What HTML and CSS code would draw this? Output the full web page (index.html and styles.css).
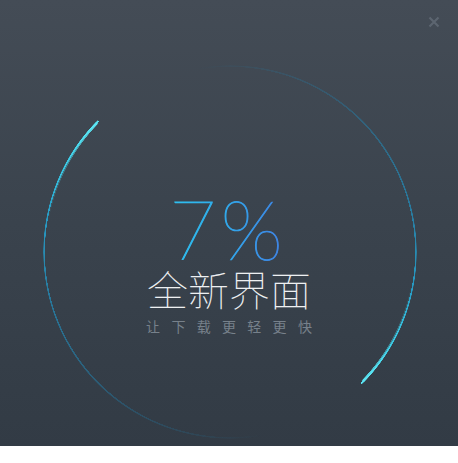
FILE: index.html
```html
<!DOCTYPE html>
<html lang="zh">
<head>
<meta charset="utf-8">
<link rel="stylesheet" href="styles.css">
</head>
<body>
<div class="panel">
  <div class="ring ring-thin"></div>
  <div class="ring ring-thick"></div>
  <button class="close" aria-label="关闭">
    <svg width="12" height="12" viewBox="0 0 12 12"><path d="M1.5 1.5 L10.5 10.5 M10.5 1.5 L1.5 10.5" stroke="#5c6570" stroke-width="2.2" stroke-linecap="butt"/></svg>
  </button>
  <div class="content">
    <svg class="percent" width="124" height="64" viewBox="0 0 124 64">
      <defs>
        <linearGradient id="pg" x1="0" y1="0" x2="1" y2="0">
          <stop offset="0" stop-color="#2ec2f0"/>
          <stop offset="0.45" stop-color="#30aaea"/>
          <stop offset="1" stop-color="#3f7fe2"/>
        </linearGradient>
      </defs>
      <text class="percent-text" x="62" y="61" text-anchor="middle" fill="url(#pg)" stroke="url(#pg)" stroke-width="0.9">7%</text>
    </svg>
    <div class="title">全新界面</div>
    <div class="subtitle">让下载更轻更快</div>
  </div>
</div>
</body>
</html>
```
FILE: styles.css
```css
html, body {
  margin: 0;
  padding: 0;
  background: #ffffff;
}
.panel {
  position: relative;
  width: 458px;
  height: 446px;
  background: linear-gradient(180deg, #444c56 0%, #3a434d 50%, #323b45 100%);
  overflow: hidden;
  display: flex;
  flex-direction: column;
  align-items: center;
}
.ring {
  position: absolute;
  left: 43px;
  top: 65px;
  width: 374px;
  height: 374px;
  border-radius: 50%;
}
.ring-thin {
  background: conic-gradient(from 135deg,
    rgba(30, 120, 170, 0) 0deg,
    rgba(30, 120, 170, 0) 35deg,
    rgba(30, 135, 185, 0.3) 80deg,
    rgba(32, 150, 200, 0.65) 120deg,
    rgba(38, 170, 215, 0.9) 150deg,
    #3ccbe8 170deg,
    #5ae4f3 180deg,
    rgba(30, 120, 170, 0) 180deg,
    rgba(30, 120, 170, 0) 215deg,
    rgba(30, 135, 185, 0.3) 260deg,
    rgba(32, 150, 200, 0.65) 300deg,
    rgba(38, 170, 215, 0.9) 330deg,
    #3ccbe8 350deg,
    #5ae4f3 360deg);
  -webkit-mask: radial-gradient(closest-side, transparent calc(100% - 2px), #000 calc(100% - 1.8px), #000 calc(100% - 0.6px), transparent 100%);
  mask: radial-gradient(closest-side, transparent calc(100% - 2px), #000 calc(100% - 1.8px), #000 calc(100% - 0.6px), transparent 100%);
}
.ring-thick {
  background: conic-gradient(from 135deg,
    transparent 145deg,
    rgba(70, 220, 240, 0.45) 165deg,
    #5ce6f4 179deg,
    transparent 179.5deg,
    transparent 325deg,
    rgba(70, 220, 240, 0.45) 345deg,
    #5ce6f4 359deg,
    transparent 359.5deg);
  -webkit-mask: radial-gradient(closest-side, transparent calc(100% - 3.2px), #000 calc(100% - 2.8px), #000 calc(100% - 0.4px), transparent 100%);
  mask: radial-gradient(closest-side, transparent calc(100% - 3.2px), #000 calc(100% - 2.8px), #000 calc(100% - 0.4px), transparent 100%);
}
.close {
  position: absolute;
  top: 16px;
  right: 18px;
  width: 12px;
  height: 12px;
  padding: 0;
  border: 0;
  background: none;
  display: flex;
}
.content {
  position: relative;
  margin-top: 199px;
  display: flex;
  flex-direction: column;
  align-items: center;
}
.percent {
  display: block;
  overflow: visible;
  margin-left: -3px;
}
.percent-text {
  font-family: Lato, "Noto Sans", sans-serif;
  font-weight: 100;
  font-size: 82px;
  letter-spacing: 4px;
}
.title {
  font-family: "Noto Sans CJK SC", sans-serif;
  font-weight: 100;
  font-size: 41px;
  line-height: 48px;
  color: #eef0f2;
  margin-top: 1px;
}
.subtitle {
  font-family: "Noto Sans CJK SC", sans-serif;
  font-size: 14px;
  line-height: 18px;
  color: #77818b;
  letter-spacing: 11.3px;
  margin-left: 11.3px;
  margin-top: 5px;
}
```
